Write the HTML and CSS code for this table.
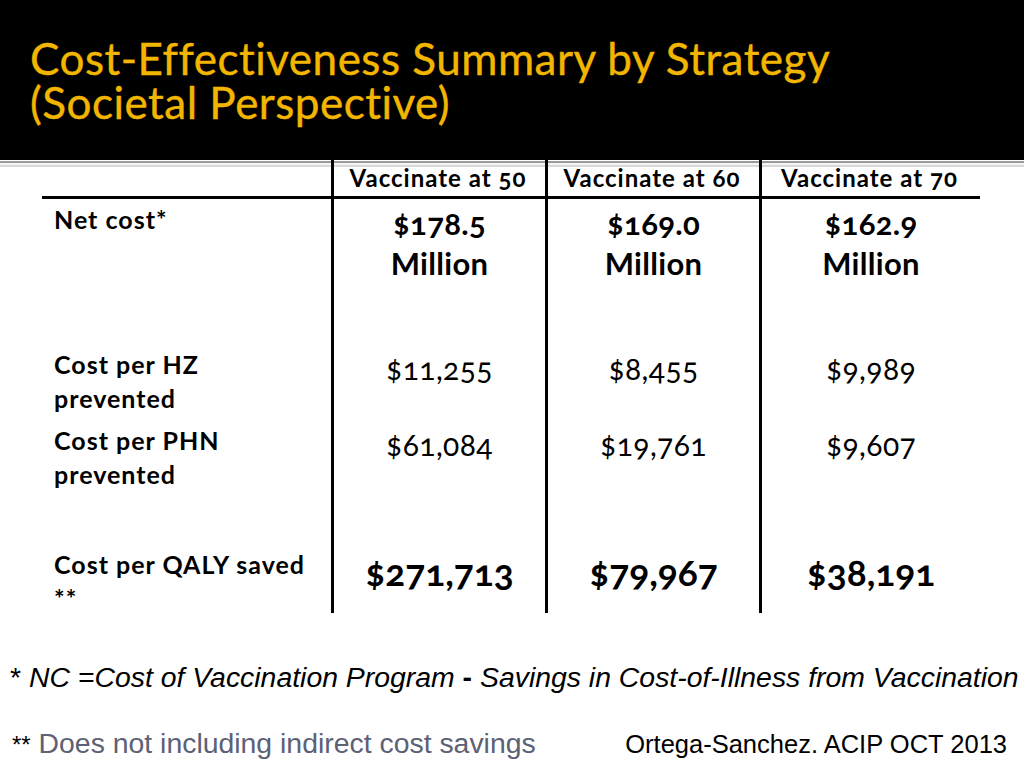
FILE: index.html
```html
<!DOCTYPE html>
<html lang="en">
<head>
<meta charset="utf-8">
<title>Cost-Effectiveness Summary by Strategy</title>
<link rel="stylesheet" href="styles.css">
</head>
<body>
<div class="slide">
  <header class="title-bar">
    <h1 class="title"><span class="tline">Cost-Effectiveness Summary by Strategy</span><span class="tline">(Societal Perspective)</span></h1>
  </header>
  <div class="rule"></div>
  <div class="table">
    <div class="cell head label"></div>
    <div class="cell head col">Vaccinate at 50</div>
    <div class="cell head col">Vaccinate at 60</div>
    <div class="cell head col last">Vaccinate at 70</div>

    <div class="cell label r1">Net cost*</div>
    <div class="cell col r1 big">$178.5<br>Million</div>
    <div class="cell col r1 big">$169.0<br>Million</div>
    <div class="cell col r1 big last">$162.9<br>Million</div>

    <div class="cell label r2">Cost per HZ<br>prevented</div>
    <div class="cell col r2 num">$11,255</div>
    <div class="cell col r2 num">$8,455</div>
    <div class="cell col r2 num last">$9,989</div>

    <div class="cell label r3">Cost per PHN<br>prevented</div>
    <div class="cell col r3 num">$61,084</div>
    <div class="cell col r3 num">$19,761</div>
    <div class="cell col r3 num last">$9,607</div>

    <div class="cell label r4">Cost per QALY saved<br>**</div>
    <div class="cell col r4 huge">$271,713</div>
    <div class="cell col r4 huge">$79,967</div>
    <div class="cell col r4 huge last">$38,191</div>
  </div>
  <p class="note1">* <i>NC =Cost of Vaccination Program</i> <b class="minus">-</b> <i>Savings in Cost-of-Illness from Vaccination</i></p>
  <div class="note2">
    <p class="nincl"><span class="stars">**</span> Does not including indirect cost savings</p>
    <p class="cite">Ortega-Sanchez. ACIP OCT 2013</p>
  </div>
</div>
</body>
</html>
```
FILE: styles.css
```css
* { box-sizing: border-box; }
html, body { margin: 0; padding: 0; background: #fff; }
.slide {
  width: 1024px;
  height: 768px;
  overflow: hidden;
  position: relative;
  background: #fff;
  font-family: Lato, "Open Sans", sans-serif;
  color: #000;
}
.title-bar {
  background: #000;
  height: 160px;
  padding: 36px 0 0 30px;
}
.title {
  margin: 0;
  color: #f2b600;
  font-weight: 400;
  font-size: 44px;
  line-height: 44px;
  letter-spacing: 0.5px;
  -webkit-text-stroke: 0.4px #f2b600;
}
.tline { display: block; height: 44px; }
.rule {
  height: 6px;
  border-top: 2px solid #9a9a9a;
  border-bottom: 2px solid #d8d8d8;
  background: #f4f4f4;
  margin-top: 1px;
  margin-bottom: -7px;
}
.table {
  margin-left: 42px;
  width: 938px;
  display: grid;
  grid-template-columns: 289px 214px 214px 221px;
  grid-template-rows: 39px 143px 77px 123px 71px;
  font-variant-numeric: oldstyle-nums;
}
.cell { font-weight: 700; }
.col {
  border-left: 3px solid #000;
  text-align: center;
}
.head {
  border-bottom: 3px solid #000;
  font-size: 24px;
  line-height: 28px;
  letter-spacing: 1px;
  padding-top: 4px;
}
.head.col { padding-right: 3px; }
.label {
  padding-left: 12px;
  font-size: 25px;
  line-height: 34px;
  letter-spacing: 1px;
}
.r1 { padding-top: 3px; }
.r2 { padding-top: 5px; }
.r3 { padding-top: 4px; }
.r4 { padding-top: 5px; }
.big {
  font-size: 31px;
  line-height: 40px;
  letter-spacing: 0.3px;
  padding-top: 4px;
}
.num {
  font-weight: 400;
  font-size: 30px;
  line-height: 34px;
  letter-spacing: 0.4px;
  padding-top: 9px;
}
.r3.num { padding-top: 8px; }
.huge {
  font-size: 37px;
  line-height: 40px;
  padding-top: 10px;
}
.note1 {
  margin: 48px 0 0 10px;
  font-family: "Liberation Sans", Arial, sans-serif;
  font-size: 28.4px;
  line-height: 32px;
  white-space: nowrap;
}
.note1 i { font-style: italic; }
.minus { font-weight: 700; }
.note2 {
  display: flex;
  align-items: baseline;
  justify-content: space-between;
  margin: 34px 0 0 12px;
  padding-right: 17px;
  font-family: "Liberation Sans", Arial, sans-serif;
}
.note2 p { margin: 0; }
.nincl {
  font-size: 28.4px;
  color: #5c6175;
}
.stars { color: #000; font-size: 24px; }
.cite {
  font-size: 25.5px;
  color: #000;
}
```
